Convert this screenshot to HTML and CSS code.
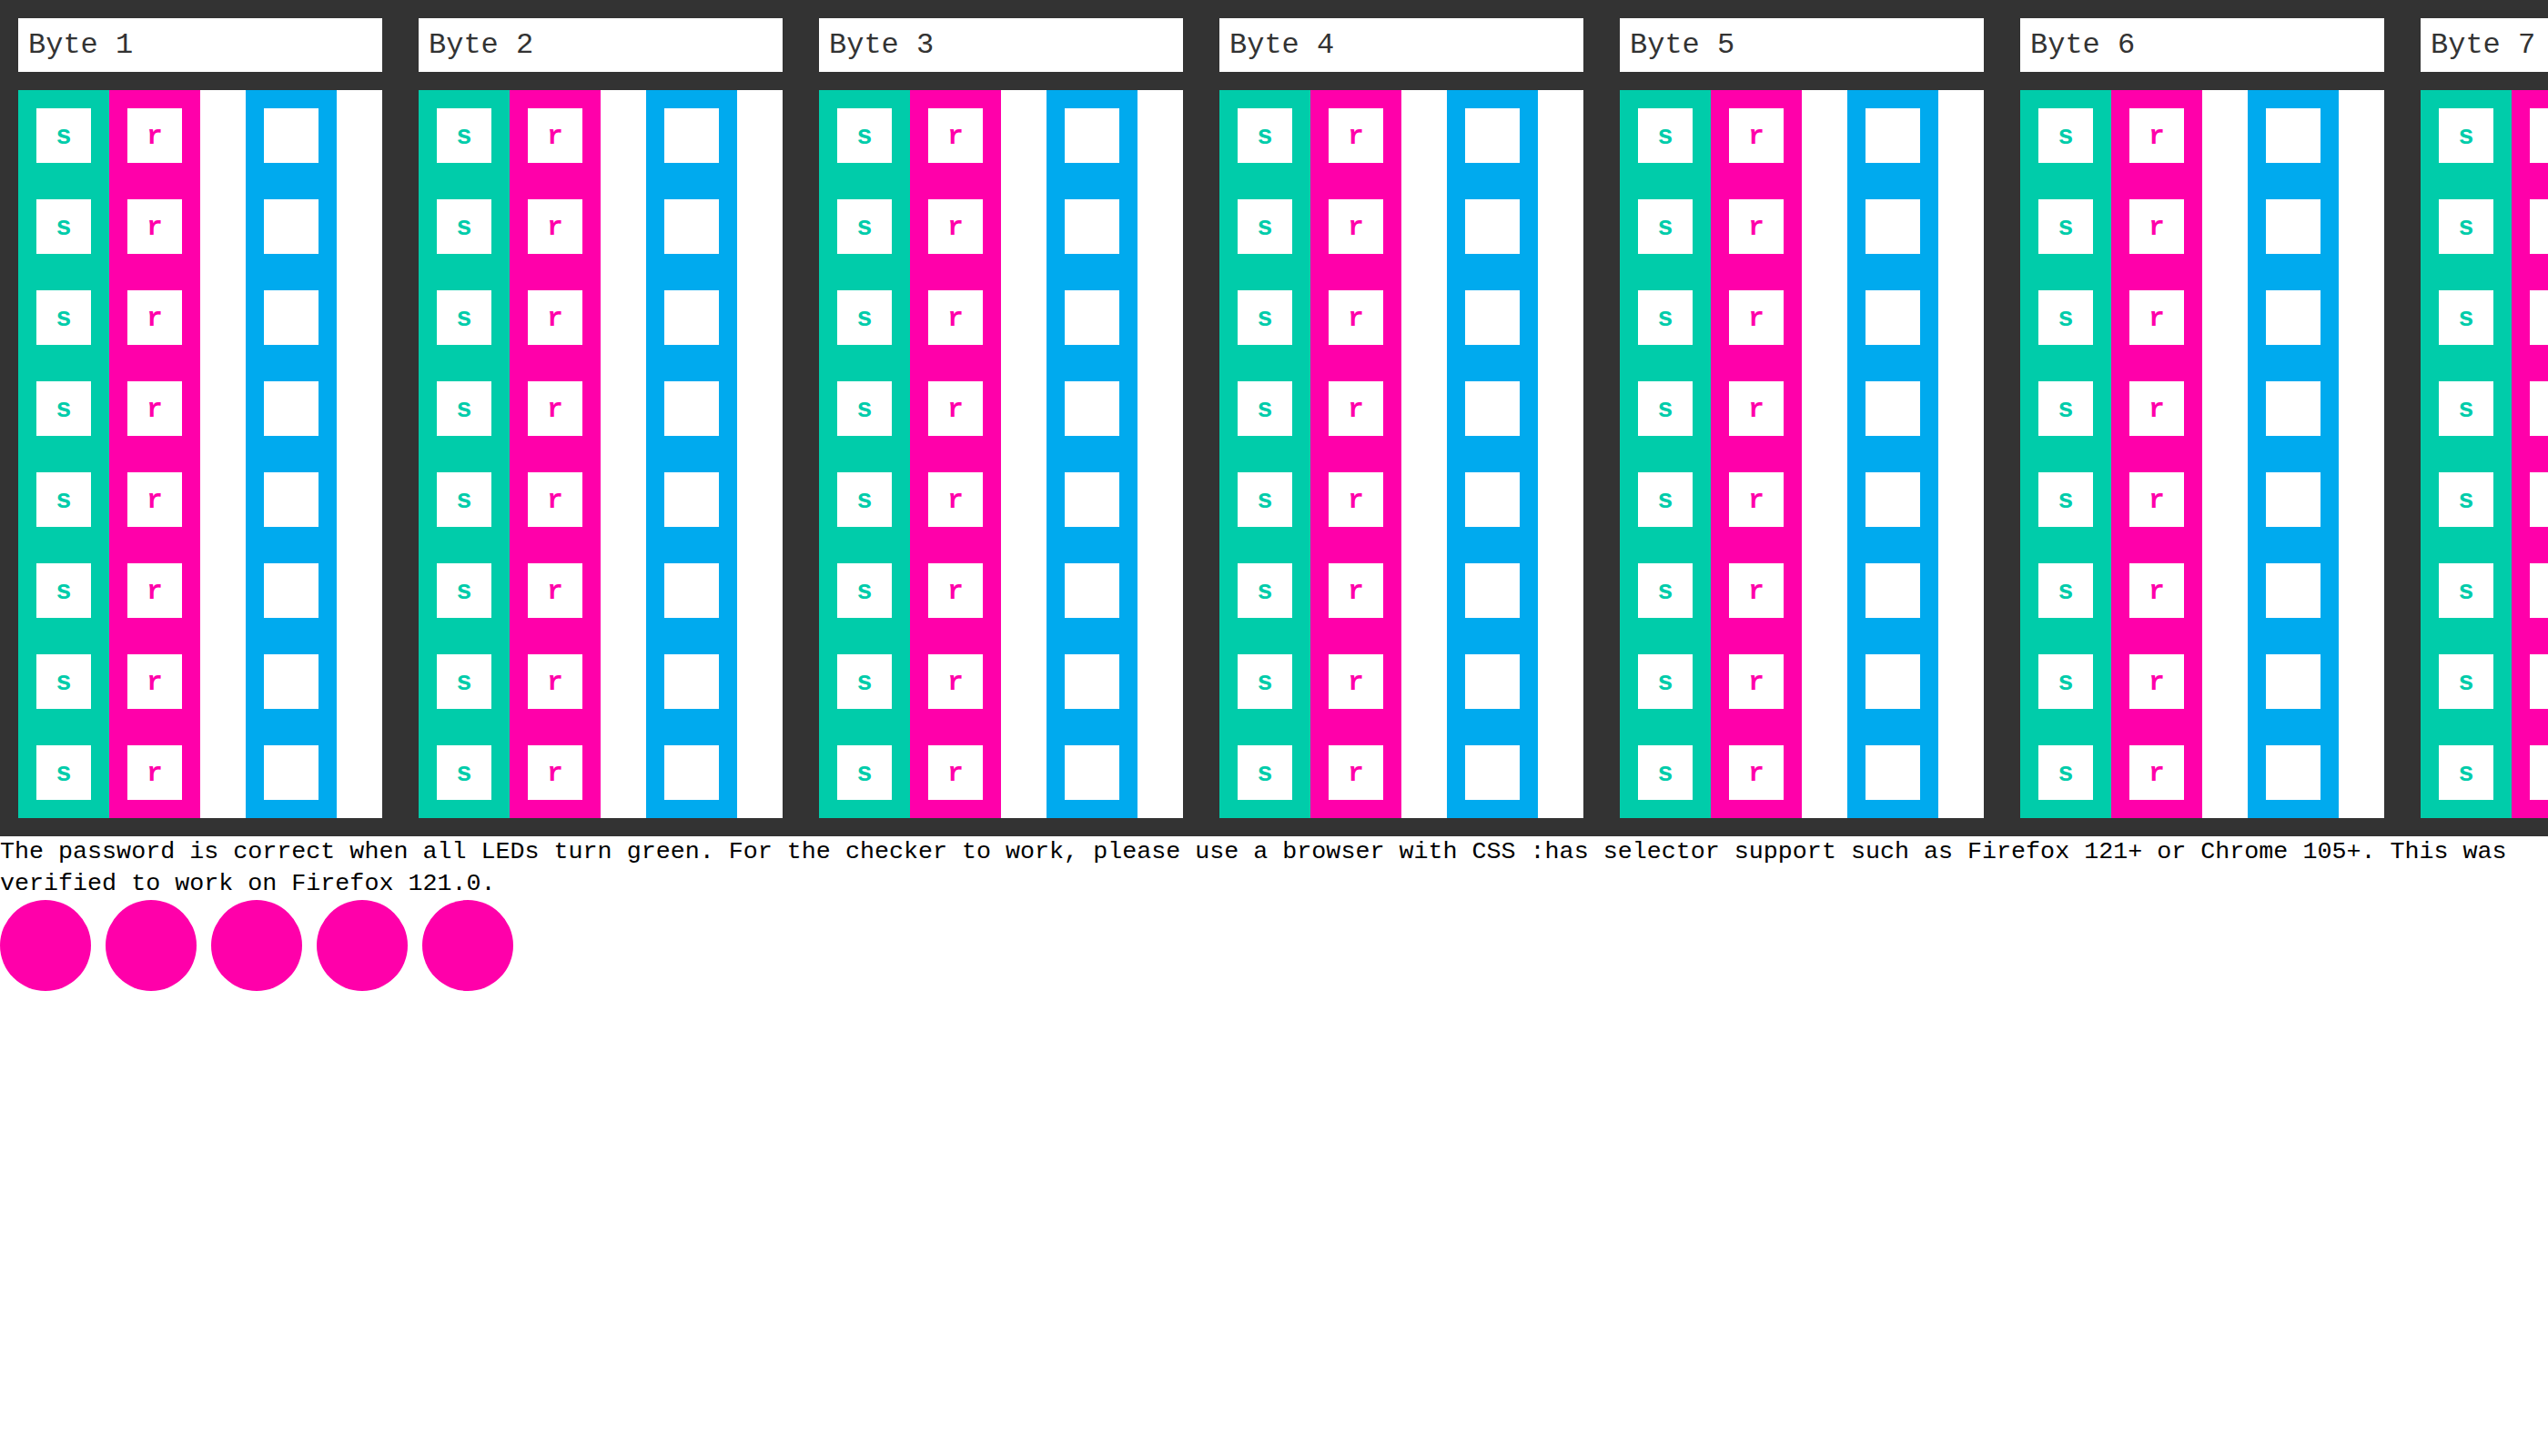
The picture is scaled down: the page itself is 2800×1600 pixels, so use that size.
FILE: index.html
```html
<!DOCTYPE html>
<html>
<head>
<meta charset="utf-8">
<link rel="stylesheet" href="styles.css">
</head>
<body>
<div class="board">
  <div class="byte"><div class="label">Byte 1</div><div class="grid">
    <div class="col teal"><div class="sq">s</div><div class="sq">s</div><div class="sq">s</div><div class="sq">s</div><div class="sq">s</div><div class="sq">s</div><div class="sq">s</div><div class="sq">s</div></div>
    <div class="col pink"><div class="sq">r</div><div class="sq">r</div><div class="sq">r</div><div class="sq">r</div><div class="sq">r</div><div class="sq">r</div><div class="sq">r</div><div class="sq">r</div></div>
    <div class="spacer"></div>
    <div class="col blue"><div class="sq"></div><div class="sq"></div><div class="sq"></div><div class="sq"></div><div class="sq"></div><div class="sq"></div><div class="sq"></div><div class="sq"></div></div>
    <div class="spacer"></div>
  </div></div>
  <div class="byte"><div class="label">Byte 2</div><div class="grid">
    <div class="col teal"><div class="sq">s</div><div class="sq">s</div><div class="sq">s</div><div class="sq">s</div><div class="sq">s</div><div class="sq">s</div><div class="sq">s</div><div class="sq">s</div></div>
    <div class="col pink"><div class="sq">r</div><div class="sq">r</div><div class="sq">r</div><div class="sq">r</div><div class="sq">r</div><div class="sq">r</div><div class="sq">r</div><div class="sq">r</div></div>
    <div class="spacer"></div>
    <div class="col blue"><div class="sq"></div><div class="sq"></div><div class="sq"></div><div class="sq"></div><div class="sq"></div><div class="sq"></div><div class="sq"></div><div class="sq"></div></div>
    <div class="spacer"></div>
  </div></div>
  <div class="byte"><div class="label">Byte 3</div><div class="grid">
    <div class="col teal"><div class="sq">s</div><div class="sq">s</div><div class="sq">s</div><div class="sq">s</div><div class="sq">s</div><div class="sq">s</div><div class="sq">s</div><div class="sq">s</div></div>
    <div class="col pink"><div class="sq">r</div><div class="sq">r</div><div class="sq">r</div><div class="sq">r</div><div class="sq">r</div><div class="sq">r</div><div class="sq">r</div><div class="sq">r</div></div>
    <div class="spacer"></div>
    <div class="col blue"><div class="sq"></div><div class="sq"></div><div class="sq"></div><div class="sq"></div><div class="sq"></div><div class="sq"></div><div class="sq"></div><div class="sq"></div></div>
    <div class="spacer"></div>
  </div></div>
  <div class="byte"><div class="label">Byte 4</div><div class="grid">
    <div class="col teal"><div class="sq">s</div><div class="sq">s</div><div class="sq">s</div><div class="sq">s</div><div class="sq">s</div><div class="sq">s</div><div class="sq">s</div><div class="sq">s</div></div>
    <div class="col pink"><div class="sq">r</div><div class="sq">r</div><div class="sq">r</div><div class="sq">r</div><div class="sq">r</div><div class="sq">r</div><div class="sq">r</div><div class="sq">r</div></div>
    <div class="spacer"></div>
    <div class="col blue"><div class="sq"></div><div class="sq"></div><div class="sq"></div><div class="sq"></div><div class="sq"></div><div class="sq"></div><div class="sq"></div><div class="sq"></div></div>
    <div class="spacer"></div>
  </div></div>
  <div class="byte"><div class="label">Byte 5</div><div class="grid">
    <div class="col teal"><div class="sq">s</div><div class="sq">s</div><div class="sq">s</div><div class="sq">s</div><div class="sq">s</div><div class="sq">s</div><div class="sq">s</div><div class="sq">s</div></div>
    <div class="col pink"><div class="sq">r</div><div class="sq">r</div><div class="sq">r</div><div class="sq">r</div><div class="sq">r</div><div class="sq">r</div><div class="sq">r</div><div class="sq">r</div></div>
    <div class="spacer"></div>
    <div class="col blue"><div class="sq"></div><div class="sq"></div><div class="sq"></div><div class="sq"></div><div class="sq"></div><div class="sq"></div><div class="sq"></div><div class="sq"></div></div>
    <div class="spacer"></div>
  </div></div>
  <div class="byte"><div class="label">Byte 6</div><div class="grid">
    <div class="col teal"><div class="sq">s</div><div class="sq">s</div><div class="sq">s</div><div class="sq">s</div><div class="sq">s</div><div class="sq">s</div><div class="sq">s</div><div class="sq">s</div></div>
    <div class="col pink"><div class="sq">r</div><div class="sq">r</div><div class="sq">r</div><div class="sq">r</div><div class="sq">r</div><div class="sq">r</div><div class="sq">r</div><div class="sq">r</div></div>
    <div class="spacer"></div>
    <div class="col blue"><div class="sq"></div><div class="sq"></div><div class="sq"></div><div class="sq"></div><div class="sq"></div><div class="sq"></div><div class="sq"></div><div class="sq"></div></div>
    <div class="spacer"></div>
  </div></div>
  <div class="byte"><div class="label">Byte 7</div><div class="grid">
    <div class="col teal"><div class="sq">s</div><div class="sq">s</div><div class="sq">s</div><div class="sq">s</div><div class="sq">s</div><div class="sq">s</div><div class="sq">s</div><div class="sq">s</div></div>
    <div class="col pink"><div class="sq">r</div><div class="sq">r</div><div class="sq">r</div><div class="sq">r</div><div class="sq">r</div><div class="sq">r</div><div class="sq">r</div><div class="sq">r</div></div>
    <div class="spacer"></div>
    <div class="col blue"><div class="sq"></div><div class="sq"></div><div class="sq"></div><div class="sq"></div><div class="sq"></div><div class="sq"></div><div class="sq"></div><div class="sq"></div></div>
    <div class="spacer"></div>
  </div></div>
</div>
<p class="note">The password is correct when all LEDs turn green. For the checker to work, please use a browser with CSS :has selector support such as Firefox 121+ or Chrome 105+. This was verified to work on Firefox 121.0.</p>
<div class="leds">
  <div class="led"></div><div class="led"></div><div class="led"></div><div class="led"></div><div class="led"></div>
</div>
</body>
</html>
```

FILE: styles.css
```css
html, body {
  margin: 0;
  padding: 0;
  background: #ffffff;
}

body {
  font-family: "Liberation Mono", "DejaVu Sans Mono", monospace;
  color: #000000;
  overflow: hidden;
}

.board {
  background: #333333;
  padding: 20px;
  display: flex;
  gap: 40px;
  overflow: hidden;
}

.byte {
  flex: 0 0 400px;
  width: 400px;
  display: flex;
  flex-direction: column;
  gap: 20px;
}

.label {
  height: 59px;
  background: #ffffff;
  color: #333333;
  font-size: 32px;
  line-height: 59px;
  padding-left: 11px;
  box-sizing: border-box;
}

.grid {
  display: flex;
  background: #ffffff;
  height: 800px;
}

.col {
  width: 100px;
  padding: 20px;
  box-sizing: border-box;
  display: flex;
  flex-direction: column;
  gap: 40px;
}

.spacer {
  width: 50px;
}

.teal { background: #00ccaa; color: #00ccaa; }
.pink { background: #ff00aa; color: #ff00aa; }
.blue { background: #00aaee; }

.sq {
  width: 60px;
  height: 60px;
  background: #ffffff;
  display: flex;
  align-items: center;
  justify-content: center;
  font-size: 29px;
  font-weight: bold;
  line-height: 1;
  padding-top: 2px;
  box-sizing: border-box;
}

.note {
  margin: 0;
  font-size: 26.7px;
  line-height: 35px;
}

.leds {
  display: flex;
  gap: 16px;
}

.led {
  width: 100px;
  height: 100px;
  border-radius: 50%;
  background: #ff00aa;
}
```
